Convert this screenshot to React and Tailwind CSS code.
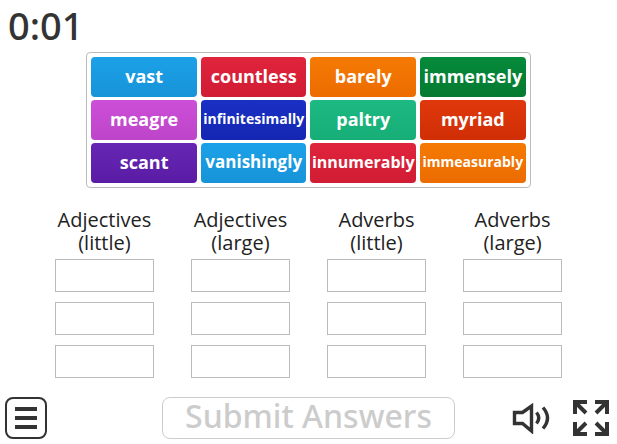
import React from "react";

const words = [
  { text: "vast", size: "text-lg", color: "from-[#1ba1e8] to-[#1893d8]" },
  { text: "countless", size: "text-lg", color: "from-[#e0243c] to-[#d01c34]" },
  { text: "barely", size: "text-lg", color: "from-[#f57a04] to-[#ec6c00]" },
  { text: "immensely", size: "text-lg", color: "from-[#058a3a] to-[#047a30]" },
  { text: "meagre", size: "text-lg", color: "from-[#cc4fd8] to-[#bd45c9]" },
  { text: "infinitesimally", size: "text-sm", color: "from-[#1a30c4] to-[#1426b2]" },
  { text: "paltry", size: "text-lg", color: "from-[#1cba82] to-[#17ad77]" },
  { text: "myriad", size: "text-lg", color: "from-[#e0380c] to-[#d02e06]" },
  { text: "scant", size: "text-lg", color: "from-[#6626b4] to-[#5a1ca4]" },
  { text: "vanishingly", size: "text-[17px]", color: "from-[#1ba1e8] to-[#1893d8]" },
  { text: "innumerably", size: "text-base", color: "from-[#e0243c] to-[#d01c34]" },
  { text: "immeasurably", size: "text-sm", color: "from-[#f57a04] to-[#ec6c00]" },
];

const groups = [
  "Adjectives (little)",
  "Adjectives (large)",
  "Adverbs (little)",
  "Adverbs (large)",
];

const MenuIcon = () => (
  <svg viewBox="0 0 22 22" className="w-[22px] h-[22px]" fill="currentColor">
    <path d="M0 0h22v4H0zM0 9h22v4H0zM0 18h22v4H0z" />
  </svg>
);

const SoundIcon = () => (
  <svg viewBox="0 0 38 32" className="w-[38px] h-8" fill="none" stroke="currentColor" strokeWidth="3.400">
    <path d="M2.500 10.500h8L19.500 4v25l-9-7.500h-8z" />
    <path d="M24.500 10.500q4.500 5.500 0 11M31 5.500q9 10.500 0 21" />
  </svg>
);

const FullscreenIcon = () => (
  <svg viewBox="0 0 38 38" className="w-[38px] h-[38px]" fill="none" stroke="currentColor" strokeWidth="4">
    <path d="M3 15V3h12M23 3h12v12M35 23v12H23M15 35H3V23" />
    <path d="M3 3l11 11M35 3L24 14M35 35L24 24M3 35l11-11" />
  </svg>
);

const App = () => {
  return (
    <div className="min-h-screen flex flex-col bg-white text-[#333333] font-['Open_Sans',sans-serif]">
      <header className="h-[52px] px-2">
        <time className="block text-[38px] leading-[50px] font-medium font-['Noto_Sans',sans-serif]">0:01</time>
      </header>

      <main className="flex flex-col items-center">
        {/* word bank */}
        <div className="w-[72%] grid grid-cols-4 gap-x-1 gap-y-[3px] p-1 border border-[#bbbbbb] rounded-sm">
          {words.map((word) => (
            <button
              key={word.text}
              type="button"
              className={`h-10 pb-[3px] flex items-center justify-center rounded-sm bg-linear-to-b text-white font-bold ${word.size} ${word.color}`}
            >
              {word.text}
            </button>
          ))}
        </div>

        {/* drop zones */}
        <div className="w-[82.2%] mt-5 grid grid-cols-4 gap-x-[37px]">
          {groups.map((group) => (
            <section key={group} className="flex flex-col gap-[10px]">
              <h2 className="h-[41px] text-center text-xl leading-[23px] text-[#222222]">
                {group}
              </h2>
              {[1, 2, 3].map((slot) => (
                <div key={slot} className="h-[33px] border border-[#bbbbbb]" />
              ))}
            </section>
          ))}
        </div>
      </main>

      <footer className="mt-auto px-[5px] pb-[5px] grid grid-cols-[1fr_auto_1fr] items-center">
        <button
          type="button"
          aria-label="Menu"
          className="size-[42px] flex items-center justify-center border-2 border-[#333333] rounded-lg"
        >
          <MenuIcon />
        </button>
        <button
          type="button"
          disabled
          className="h-[42px] px-[22px] pb-1 flex items-center border border-[#cccccc] rounded-lg text-[32px] font-medium font-['Noto_Sans',sans-serif] text-[#cccccc]"
        >
          Submit Answers
        </button>
        <div className="pr-[2px] flex items-center justify-end gap-[22px]">
          <button type="button" aria-label="Sound">
            <SoundIcon />
          </button>
          <button type="button" aria-label="Fullscreen">
            <FullscreenIcon />
          </button>
        </div>
      </footer>
    </div>
  );
};

export default App;
